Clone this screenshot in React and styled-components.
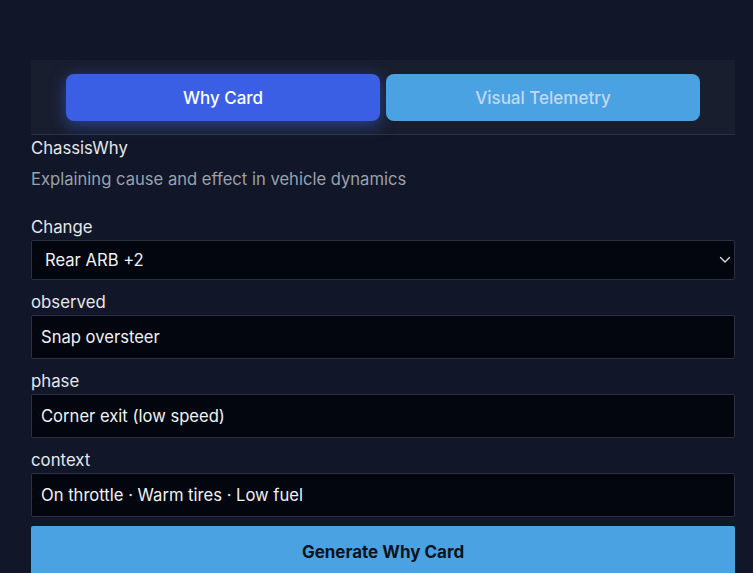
import React from "react";
import styled, { createGlobalStyle } from "styled-components";

const Global = createGlobalStyle`
  html, body { margin: 0; padding: 0; background: #111728; }
  body { font-family: Inter, "Noto Sans", "Liberation Sans", sans-serif; color: #e5e7eb; }
  * { box-sizing: border-box; }
`;

const Page = styled.div`
  padding: 60px 18px 0 31px;
  display: flex;
  flex-direction: column;
  overflow: hidden;
  height: 573px;
`;

const TabBar = styled.div`
  background: #191e2e;
  border-bottom: 1px solid #2c3244;
  padding: 14px 35px 13px;
  display: grid;
  grid-template-columns: 1fr 1fr;
  gap: 6px;
`;

const Tab = styled.button`
  height: 47px;
  border: none;
  border-radius: 8px;
  font-family: inherit;
  font-size: 17px;
  font-weight: 500;
  cursor: pointer;
  background: ${(p) => (p.$active ? "#3a5fe5" : "#4aa2e3")};
  color: ${(p) => (p.$active ? "#ffffff" : "#c3d8ee")};
  box-shadow: ${(p) => (p.$active ? "0 4px 16px rgba(59, 96, 229, 0.55)" : "none")};
`;

const Title = styled.div`
  font-size: 16.7px;
  color: #e5e7eb;
  margin-top: 1px;
  line-height: 24px;
`;

const Subtitle = styled.div`
  font-size: 16.6px;
  color: #9aa1ad;
  margin-top: 7px;
  line-height: 24px;
`;

const Form = styled.div`
  margin-top: 24px;
  display: flex;
  flex-direction: column;
`;

const Field = styled.div`
  display: flex;
  flex-direction: column;
  margin-bottom: 10px;
`;

const Label = styled.label`
  font-size: 16.8px;
  line-height: 24px;
  color: #e5e7eb;
  margin-bottom: 1px;
`;

const SelectWrap = styled.div`
  position: relative;
  height: 40px;
  background: #03050f;
  border: 1px solid #2a3041;
  border-radius: 2px;
  display: flex;
  align-items: center;
  padding-left: 13px;
  font-size: 16.6px;
  color: #f1f2f4;
`;

const Chevron = styled.svg`
  position: absolute;
  right: 3px;
  top: 50%;
  transform: translateY(-50%);
`;

const Input = styled.div`
  height: 44px;
  background: #03050f;
  border: 1px solid #2a3041;
  border-radius: 2px;
  display: flex;
  align-items: center;
  padding-left: 9px;
  font-size: 16.6px;
  color: #f1f2f4;
`;

const Generate = styled.button`
  height: 52px;
  border: none;
  border-radius: 2px;
  background: #4aa2e3;
  color: #0b1220;
  font-family: inherit;
  font-size: 17px;
  font-weight: 700;
  margin-top: -1px;
  padding-bottom: 2px;
`;

export default function App() {
  return (
    <>
      <Global />
      <Page>
        <TabBar>
          <Tab $active>Why Card</Tab>
          <Tab>Visual Telemetry</Tab>
        </TabBar>
        <Title>ChassisWhy</Title>
        <Subtitle>Explaining cause and effect in vehicle dynamics</Subtitle>
        <Form>
          <Field>
            <Label>Change</Label>
            <SelectWrap>
              Rear ARB +2
              <Chevron width="12" height="8" viewBox="0 0 12 8" fill="none">
                <path d="M1.5 1.5 L6 6 L10.5 1.5" stroke="#d8dbe2" strokeWidth="1.4" strokeLinecap="round" strokeLinejoin="round" />
              </Chevron>
            </SelectWrap>
          </Field>
          <Field>
            <Label>observed</Label>
            <Input>Snap oversteer</Input>
          </Field>
          <Field>
            <Label>phase</Label>
            <Input>Corner exit (low speed)</Input>
          </Field>
          <Field>
            <Label>context</Label>
            <Input>On throttle · Warm tires · Low fuel</Input>
          </Field>
          <Generate>Generate Why Card</Generate>
        </Form>
      </Page>
    </>
  );
}
